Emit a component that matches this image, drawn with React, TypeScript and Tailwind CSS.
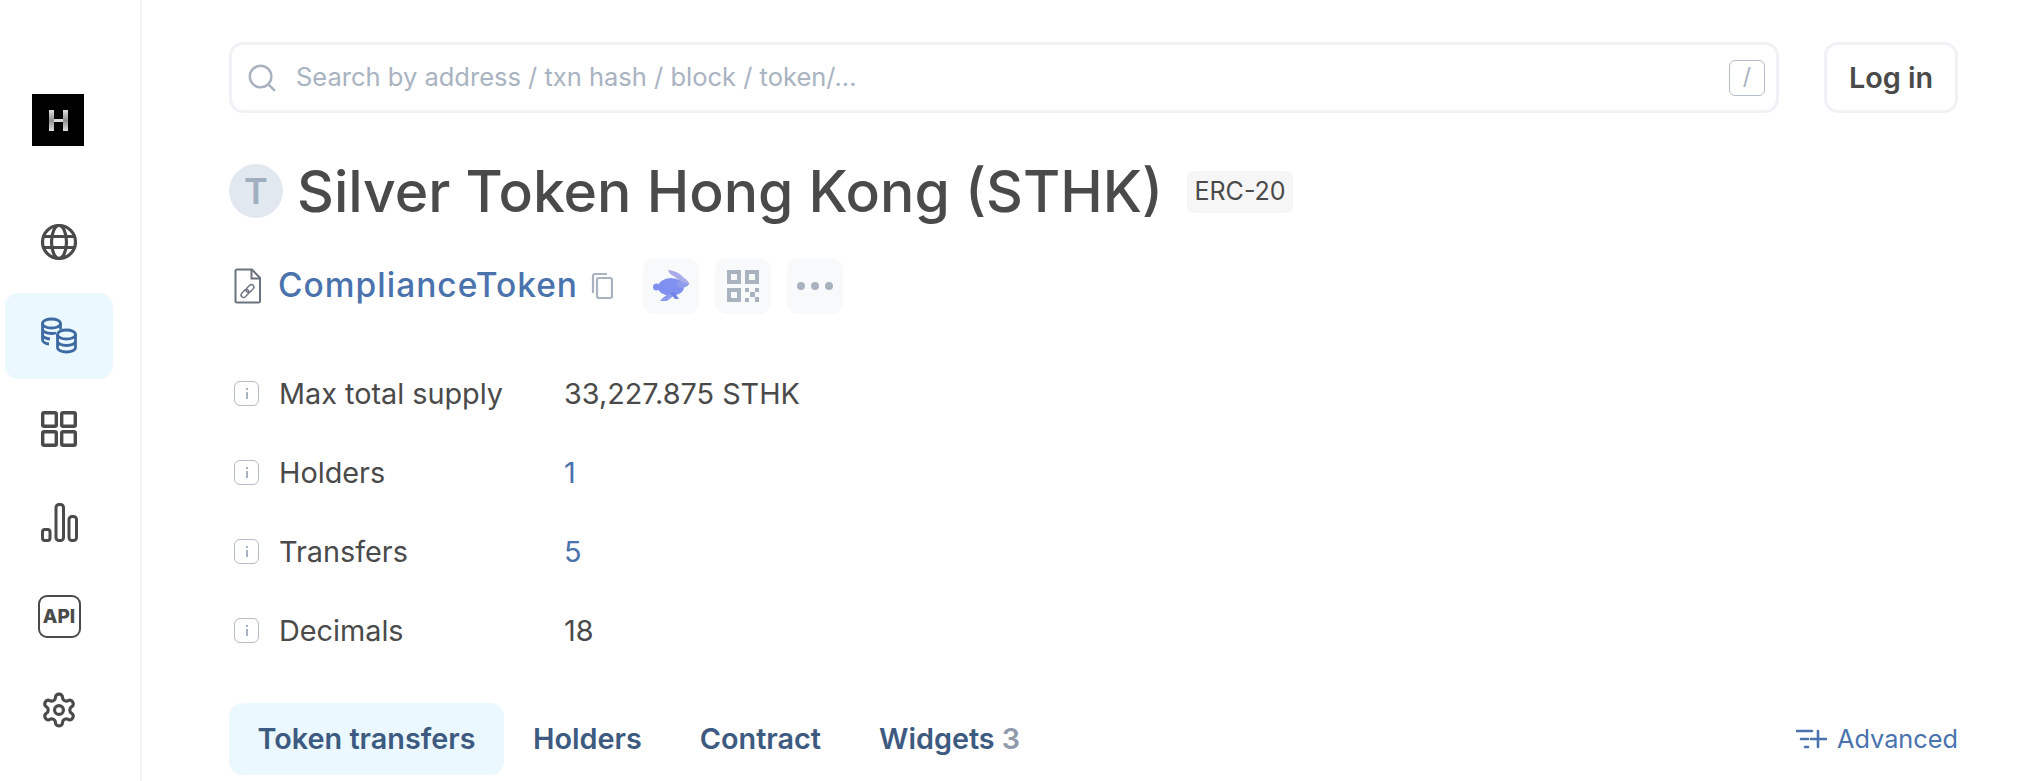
import React from "react";

const inter = { fontFamily: "Inter, sans-serif" };

function Globe() {
  return (
    <svg width="38" height="38" viewBox="0 0 38 38" fill="none" stroke="#4a4a4a" strokeWidth="3.2">
      <circle cx="19" cy="19" r="16.5" />
      <ellipse cx="19" cy="19" rx="7.5" ry="16.5" />
      <path d="M3.5 13.5h31M3.5 24.5h31" />
    </svg>
  );
}
function Coins() {
  return (
    <svg width="38" height="38" viewBox="0 0 38 38" fill="none" stroke="#3e6aa3" strokeWidth="2.8">
      <ellipse cx="11.5" cy="6.500" rx="9" ry="4.5" />
      <path d="M2.500 6.500v16c0 2.400 3 4.200 6.500 4.500M2.500 12c0 2.500 4 4.500 9 4.500 1.500 0 3-.2 4.400-.5M2.500 17.500c0 2.400 3.400 4.300 7.500 4.500" />
      <path d="M20.500 6.500v6" />
      <ellipse cx="26.500" cy="17.500" rx="9" ry="4.500" />
      <path d="M17.500 17.500v13c0 2.600 4 4.500 9 4.500s9-1.900 9-4.500v-13M17.500 24c0 2.500 4 4.500 9 4.500s9-2 9-4.500" />
    </svg>
  );
}
function Grid() {
  return (
    <svg width="36" height="36" viewBox="0 0 36 36" fill="none" stroke="#4a4a4a" strokeWidth="3.4">
      <rect x="1.700" y="1.700" width="13.600" height="13.600" rx="1.500" />
      <rect x="20.700" y="1.700" width="13.600" height="13.600" rx="1.500" />
      <rect x="1.700" y="20.700" width="13.600" height="13.600" rx="1.500" />
      <rect x="20.700" y="20.700" width="13.600" height="13.600" rx="1.500" />
    </svg>
  );
}
function Bars() {
  return (
    <svg width="37" height="39" viewBox="0 0 37 39" fill="none" stroke="#4a4a4a" strokeWidth="3">
      <rect x="1.500" y="26.500" width="7.500" height="11" rx="2.500" />
      <rect x="15" y="1.500" width="7.500" height="36" rx="3" />
      <rect x="28" y="13.500" width="7.500" height="24" rx="3" />
    </svg>
  );
}
function Api() {
  return (
    <div className="flex h-[43px] w-[43px] items-center justify-center rounded-[9px] border-[2.5px] border-[#4a4a4a]">
      <span className="text-[19px] font-extrabold leading-none text-[#4a4a4a]" style={{ fontFamily: "Inter, sans-serif" }}>API</span>
    </div>
  );
}
function Gear() {
  return (
    <svg width="38" height="38" viewBox="0 0 24 24" fill="none" stroke="#4a4a4a" strokeWidth="2" strokeLinecap="round" strokeLinejoin="round">
      <path d="M12.22 2h-.44a2 2 0 0 0-2 2v.18a2 2 0 0 1-1 1.730l-.43.25a2 2 0 0 1-2 0l-.15-.08a2 2 0 0 0-2.730.730l-.22.38a2 2 0 0 0 .73 2.730l.15.1a2 2 0 0 1 1 1.720v.51a2 2 0 0 1-1 1.740l-.15.09a2 2 0 0 0-.73 2.730l.22.38a2 2 0 0 0 2.730.730l.15-.08a2 2 0 0 1 2 0l.43.25a2 2 0 0 1 1 1.730V20a2 2 0 0 0 2 2h.44a2 2 0 0 0 2-2v-.18a2 2 0 0 1 1-1.730l.43-.25a2 2 0 0 1 2 0l.15.08a2 2 0 0 0 2.730-.730l.22-.39a2 2 0 0 0-.73-2.730l-.15-.08a2 2 0 0 1-1-1.740v-.5a2 2 0 0 1 1-1.740l.15-.09a2 2 0 0 0 .73-2.730l-.22-.38a2 2 0 0 0-2.730-.730l-.15.08a2 2 0 0 1-2 0l-.43-.25a2 2 0 0 1-1-1.730V4a2 2 0 0 0-2-2z" />
      <circle cx="12" cy="12" r="2.800" />
    </svg>
  );
}
function Logo() {
  return (
    <svg width="52" height="52" viewBox="0 0 52 52">
      <defs>
        <linearGradient id="hbar" x1="0" y1="0" x2="0" y2="1">
          <stop offset="0" stopColor="#e0e0e0" />
          <stop offset="0.5" stopColor="#8f8f8f" />
          <stop offset="1" stopColor="#e0e0e0" />
        </linearGradient>
      </defs>
      <rect width="52" height="52" fill="#000" />
      <rect x="17" y="16" width="5" height="21" fill="url(#hbar)" />
      <rect x="31" y="16" width="5" height="21" fill="url(#hbar)" />
      <rect x="22" y="25" width="9" height="3" fill="#d9d9d9" />
    </svg>
  );
}
function NavItem({ active, children }: { active?: boolean; children: React.ReactNode }) {
  return (
    <div className={`flex h-[86px] w-[108px] items-center justify-center rounded-[14px] ${active ? "bg-[#ebf8ff]" : ""}`}>
      {children}
    </div>
  );
}
function InfoIcon() {
  return (
    <div className="flex h-[25px] w-[25px] shrink-0 items-center justify-center rounded-[6px] border-[1.5px] border-[#b4bcc8]">
      <svg width="4" height="11" viewBox="0 0 4 11" fill="#a9b2bf">
        <rect x="1" y="0" width="2" height="2" />
        <rect x="1" y="4" width="2" height="7" />
      </svg>
    </div>
  );
}
function Row({ label, value, link }: { label: string; value: string; link?: boolean }) {
  return (
    <div className="flex h-[79px] items-center">
      <div className="ml-[5px] flex w-[330px] items-center gap-[20px]">
        <InfoIcon />
        <span className="text-[28.8px] text-[#4a4a4a]">{label}</span>
      </div>
      <span className={`text-[28.8px] ${link ? "text-[#4a72ad]" : "text-[#4a4a4a]"}`}>{value}</span>
    </div>
  );
}
function ActionBtn({ children }: { children: React.ReactNode }) {
  return <div className="flex h-[56px] w-[56px] items-center justify-center rounded-[12px] bg-[#f8f9fb]">{children}</div>;
}

export default function App() {
  return (
    <div className="flex h-[781px] w-[2030px] overflow-hidden bg-white" style={inter}>
      <aside className="flex w-[142px] shrink-0 flex-col border-r-2 border-[#f3f4f6] pl-[5px] pt-[94px]">
        <div className="ml-[27px] h-[52px] w-[52px]"><Logo /></div>
        <div className="mt-[53px] flex flex-col gap-[7.6px]">
          <NavItem><Globe /></NavItem>
          <NavItem active><Coins /></NavItem>
          <NavItem><Grid /></NavItem>
          <NavItem><Bars /></NavItem>
          <NavItem><Api /></NavItem>
          <NavItem><Gear /></NavItem>
        </div>
      </aside>
      <main className="flex min-w-0 flex-1 flex-col pl-[87px] pr-[72px] pt-[42px]">
        <div className="flex items-center gap-[45px]">
          <div className="flex h-[71px] flex-1 items-center rounded-[14px] border-[3px] border-[#f0f2f5] pl-[15px] pr-[11px]">
            <svg width="30" height="30" viewBox="0 0 32 32" fill="none" stroke="#a9b2bf" strokeWidth="2.600" strokeLinecap="round">
              <circle cx="14.500" cy="14.500" r="11.500" />
              <path d="M23 23l6 6" />
            </svg>
            <span className="ml-[19px] flex-1 text-[25.500px] text-[#a9b3c1]">Search by address / txn hash / block / token/...</span>
            <div className="flex h-[36px] w-[36px] items-center justify-center rounded-[6px] border-[1.5px] border-[#b4bcc8] text-[23px] text-[#a9b2bf]">/</div>
          </div>
          <div className="flex h-[71px] w-[134px] items-center justify-center rounded-[14px] border-[3px] border-[#f0f2f5] text-[28.8px] font-semibold text-[#4a4a4a]">Log in</div>
        </div>

        <div className="mt-[38px] flex h-[80px] items-center">
          <div className="flex h-[54px] w-[54px] shrink-0 items-center justify-center rounded-full bg-[#e2e8f0] text-[36px] font-semibold text-[#a0aec0]">T</div>
          <h1 className="ml-[14px] mt-[1px] text-[57.1px] font-medium leading-none text-[#4a4a4a]">Silver Token Hong Kong (STHK)</h1>
          <span className="ml-[24px] mt-[2px] flex h-[42px] w-[106px] items-center justify-center rounded-[6px] bg-[#f6f6f6] text-[25px] text-[#4a4a4a]">ERC-20</span>
        </div>

        <div className="mt-[26px] flex h-[57px] items-center">
          <svg className="ml-[5px]" width="27" height="36" viewBox="0 0 27 36" fill="none" stroke="#6b7280" strokeWidth="2">
            <path d="M3 1.500h15l8 8.500V33a1.500 1.500 0 0 1-1.500 1.500H3A1.500 1.500 0 0 1 1.500 33V3A1.500 1.500 0 0 1 3 1.500z" />
            <path d="M17.500 2v8.500h8" />
            <g transform="rotate(-45 13.500 23)" strokeWidth="1.400">
              <rect x="5.500" y="20.500" width="9" height="5" rx="2.500" />
              <rect x="12.500" y="20.500" width="9" height="5" rx="2.500" />
            </g>
          </svg>
          <span className="ml-[17px] w-[298px] whitespace-nowrap text-[33.5px] font-medium tracking-[1px] text-[#4a72ad]">ComplianceToken</span>
          <svg className="ml-[15px]" width="22" height="26" viewBox="0 0 22 26" fill="none" stroke="#a9b2bf" strokeWidth="2.200">
            <rect x="6" y="5" width="15" height="20" rx="2" />
            <path d="M2 20V3a2 2 0 0 1 2-2h12" />
          </svg>
          <div className="ml-[30px] flex gap-[16px]">
            <ActionBtn>
              <svg width="37" height="33" viewBox="0 0 37 33">
                <path d="M15 1c6 .5 12 3 16 8 2.500 1.500 5 4 5.500 6-2 1.500-5 1.500-7.500 1C26 10 21 7 18 5.500 16.500 4.500 15.500 2.500 15 1z" fill="#a7abe8" />
                <ellipse cx="18" cy="18" rx="13" ry="9" fill="#7f90f0" />
                <circle cx="3.500" cy="18" r="3.500" fill="#7f90f0" />
                <path d="M23 12l13 3c-1.500 3-6 4.500-10 4z" fill="#8f9cec" />
                <path d="M16 25h7l-9 7H7c1.500-2.500 5-5 9-7z" fill="#8b9cf0" />
                <path d="M21 23l5 7h-4l-5-6z" fill="#7384e8" />
              </svg>
            </ActionBtn>
            <ActionBtn>
              <svg width="32" height="32" viewBox="0 0 32 32" fill="#a9b2bf">
                <path fillRule="evenodd" d="M0 0h14v14H0zM4 4v6h6V4zM18 0h14v14H18zM22 4v6h6V4zM0 18h14v14H0zM4 22v6h6v-6z" />
                <path d="M18 18h4v4h-4zM28 18h4v4h-4zM23 22h5v5h-5zM18 28h4v4h-4zM28 27h4v5h-4z" />
              </svg>
            </ActionBtn>
            <ActionBtn>
              <svg width="36" height="8" viewBox="0 0 36 8" fill="#a9b2bf">
                <circle cx="4" cy="4" r="4" /><circle cx="18" cy="4" r="4" /><circle cx="32" cy="4" r="4" />
              </svg>
            </ActionBtn>
          </div>
        </div>

        <div className="mt-[40px] flex flex-col">
          <Row label="Max total supply" value="33,227.875 STHK" />
          <Row label="Holders" value="1" link />
          <Row label="Transfers" value="5" link />
          <Row label="Decimals" value="18" />
        </div>

        <div className="mt-[33px] flex h-[72px] items-center text-[28.8px] font-semibold text-[#3d5a80]">
          <div className="flex h-[72px] items-center rounded-[14px] bg-[#ebf8ff] px-[28.500px]">Token transfers</div>
          <div className="flex h-[72px] items-center px-[29px]">Holders</div>
          <div className="flex h-[72px] items-center px-[29px]">Contract</div>
          <div className="flex h-[72px] items-center gap-[7px] px-[29px]">Widgets <span className="text-[#8f9bab]">3</span></div>
          <div className="ml-auto flex items-center gap-[10px] text-[25.300px] font-normal text-[#4a72ad]">
            <svg width="31" height="22" viewBox="0 0 31 22" fill="none" stroke="#4a72ad" strokeWidth="2.600" strokeLinecap="round">
              <path d="M1 3h15M5 11h7M9 19h3M15 11h15M22 3v16" />
            </svg>
            Advanced
          </div>
        </div>
      </main>
    </div>
  );
}
